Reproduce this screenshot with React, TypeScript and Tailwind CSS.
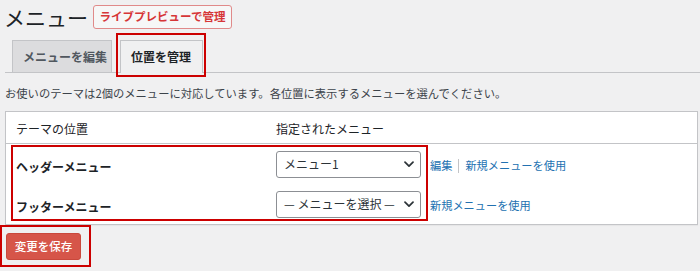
import React from "react";

const Chevron = () => (
  <svg width="10" height="7" viewBox="0 0 10 7" className="shrink-0">
    <path d="M1 1.2 L5 5.2 L9 1.2" fill="none" stroke="#2c3338" strokeWidth="1.7" strokeLinecap="round" strokeLinejoin="round" />
  </svg>
);

const Select = ({ label }: { label: string }) => (
  <div className="w-[145px] h-[27px] flex items-center justify-between pl-[7px] pr-[6px] bg-white border border-[#8c8f94] rounded-[3px] text-[12px] text-[#2c3338] leading-none">
    <span className="whitespace-nowrap">{label}</span>
    <Chevron />
  </div>
);

export default function App() {
  return (
    <div
      className="relative w-[700px] h-[271px] overflow-hidden bg-[#f0f0f1] text-[#1d2327]"
      style={{ fontFamily: '"Noto Sans CJK JP", "Noto Sans", sans-serif' }}
    >
      {/* Header */}
      <div className="h-[34px] flex items-center pl-[4px]">
        <h1 className="text-[21px] font-normal leading-none text-[#1d2327] whitespace-nowrap">メニュー</h1>
        <div className="ml-[5px] h-[24px] w-[139px] flex items-center justify-center bg-[#f6f7f7] border border-[#e08a8a] rounded-[3px] text-[11.5px] font-semibold text-[#d63638] leading-none whitespace-nowrap">
          ライブプレビューで管理
        </div>
      </div>

      {/* Tabs */}
      <div className="mt-[6px] ml-[5px] h-[33px] flex items-start pl-[7px] border-b border-[#c3c4c7]">
        <div className="h-[32px] w-[100px] flex items-center pl-[10px] bg-[#dcdcde] border border-b-0 border-[#c3c4c7] text-[12px] font-bold text-[#50575e] leading-none whitespace-nowrap">
          メニューを編集
        </div>
        <div className="ml-[8px] h-[33px] w-[83px] flex items-center pl-[10px] pb-px bg-[#f0f0f1] border border-b-0 border-[#c3c4c7] text-[12px] font-bold text-[#1d2327] leading-none whitespace-nowrap">
          位置を管理
        </div>
      </div>

      {/* Description */}
      <p className="mt-[12px] ml-[5px] text-[11.3px] leading-[17px] text-[#3c434a] whitespace-nowrap">
        お使いのテーマは2個のメニューに対応しています。各位置に表示するメニューを選んでください。
      </p>

      {/* Table */}
      <div className="mt-[9px] ml-[5px] w-[693px] bg-white border border-[#c3c4c7] shadow-[0_1px_1px_rgba(0,0,0,0.04)]">
        <div className="h-[32px] flex items-center border-b border-[#c3c4c7] text-[12px] text-[#1d2327] leading-none pt-[2px]">
          <div className="w-[270px] pl-[10px]">テーマの位置</div>
          <div>指定されたメニュー</div>
        </div>
        <div className="h-[40px] flex items-center">
          <div className="w-[270px] pl-[10px] pt-[6px] text-[12px] font-bold leading-none">ヘッダーメニュー</div>
          <Select label="メニュー1" />
          <div className="ml-[9px] pt-[3px] flex items-center text-[11.2px] leading-none text-[#2271b1] whitespace-nowrap">
            <span>編集</span>
            <span className="mx-[6px] w-px h-[14px] bg-[#c3c4c7]" />
            <span>新規メニューを使用</span>
          </div>
        </div>
        <div className="h-[40px] flex items-center">
          <div className="w-[270px] pl-[10px] pt-[6px] text-[12px] font-bold leading-none">フッターメニュー</div>
          <Select label="— メニューを選択 —" />
          <div className="ml-[9px] pt-[3px] text-[11.2px] leading-none text-[#2271b1] whitespace-nowrap">
            新規メニューを使用
          </div>
        </div>
      </div>

      {/* Save */}
      <div className="mt-[8px] ml-[6px] w-[75px] h-[27px] flex items-center justify-center bg-[#d65549] border border-[#c9483c] rounded-[3px] text-[11.5px] font-medium text-white leading-none whitespace-nowrap">
        変更を保存
      </div>

      {/* Annotation boxes */}
      <div className="absolute left-[116px] top-[33px] w-[90px] h-[44px] border-2 border-[#cc0000] pointer-events-none" />
      <div className="absolute left-[11px] top-[145px] w-[417px] h-[76px] border-2 border-[#cc0000] pointer-events-none" />
      <div className="absolute left-[0px] top-[225px] w-[91px] h-[42px] border-2 border-[#cc0000] pointer-events-none" />
    </div>
  );
}
